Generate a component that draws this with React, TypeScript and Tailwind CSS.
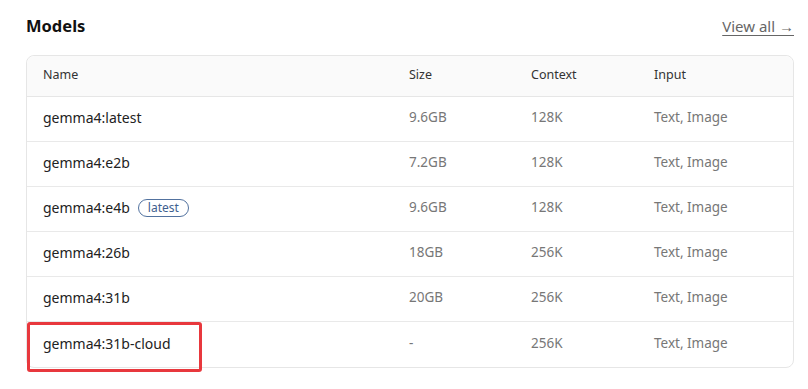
type Model = {
  name: string;
  size: string;
  context: string;
  input: string;
  tag?: string;
  highlight?: boolean;
};

const models: Model[] = [
  { name: 'gemma4:latest', size: '9.6GB', context: '128K', input: 'Text, Image' },
  { name: 'gemma4:e2b', size: '7.2GB', context: '128K', input: 'Text, Image' },
  { name: 'gemma4:e4b', size: '9.6GB', context: '128K', input: 'Text, Image', tag: 'latest' },
  { name: 'gemma4:26b', size: '18GB', context: '256K', input: 'Text, Image' },
  { name: 'gemma4:31b', size: '20GB', context: '256K', input: 'Text, Image' },
  { name: 'gemma4:31b-cloud', size: '-', context: '256K', input: 'Text, Image', highlight: true },
];

const font = { fontFamily: '"Noto Sans", "Open Sans", sans-serif' };

export default function App() {
  return (
    <div className="h-[389px] w-[808px] bg-white pl-[26px] pr-[14px]" style={font}>
      <div className="flex h-[55px] items-center justify-between pb-[2px]">
        <h2 className="text-[16.5px] font-bold text-[#111]">Models</h2>
        <a href="#" className="text-[15px] text-[#666] underline underline-offset-[3px]">
          View all →
        </a>
      </div>

      <div className="rounded-lg border border-[#e6e6e6]">
        <div className="grid h-[41px] grid-cols-[366px_122px_123px_1fr] items-center rounded-t-lg border-b border-[#e6e6e6] bg-[#fafafa] pb-[1px] pl-[16px] text-[12.5px] text-[#333]">
          <span>Name</span>
          <span>Size</span>
          <span>Context</span>
          <span>Input</span>
        </div>
        {models.map((m, i) => (
          <div
            key={m.name}
            className={
              'relative grid h-[45px] grid-cols-[366px_122px_123px_1fr] items-center pb-[3px] pl-[16px] ' +
              (i < models.length - 1 ? 'border-b border-[#e9e9e9]' : '')
            }
          >
            <span className="flex items-center gap-[8px] text-[14px] text-[#222]">
              {m.name}
              {m.tag && (
                <span className="rounded-full border border-[#52729f] px-[9px] text-[12px] leading-[16px] text-[#3f5f8f]">
                  {m.tag}
                </span>
              )}
            </span>
            <span className="text-[13.5px] text-[#777]">{m.size}</span>
            <span className="text-[13.5px] text-[#777]">{m.context}</span>
            <span className="text-[13.5px] text-[#777]">{m.input}</span>
            {m.highlight && (
              <div className="pointer-events-none absolute left-[0px] top-[0px] h-[50px] w-[175px] rounded-[3px] border-[3px] border-[#e8383d]" />
            )}
          </div>
        ))}
      </div>
    </div>
  );
}
